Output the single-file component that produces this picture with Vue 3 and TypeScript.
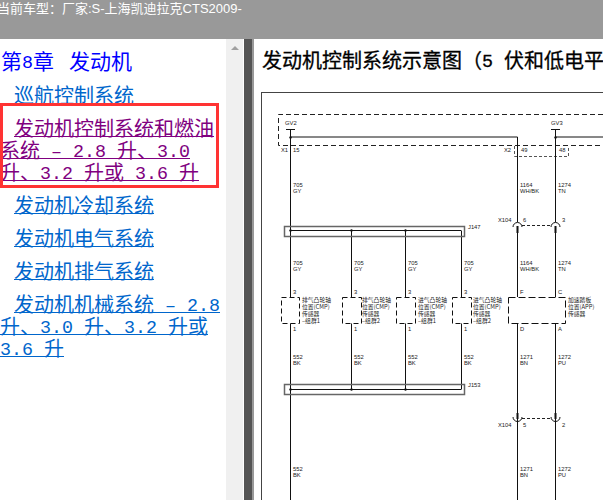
<script setup lang="ts">
interface NavLink {
  label: string
  active?: boolean
}

const links: NavLink[] = [
  { label: '巡航控制系统' },
  { label: '发动机控制系统和燃油系统 – 2.8 升、3.0 升、3.2 升或 3.6 升', active: true },
  { label: '发动机冷却系统' },
  { label: '发动机电气系统' },
  { label: '发动机排气系统' },
  { label: '发动机机械系统 – 2.8 升、3.0 升、3.2 升或 3.6 升' },
]

// latin runs are set narrower than the cjk ones, half width like the source font
function runs(text: string) {
  return text
    .split(/([ -~–]+)/)
    .filter(Boolean)
    .map((t) => ({ t, latin: /^[ -~–]/.test(t) }))
}

const title = '发动机控制系统示意图（5 伏和低电平'

const wirePaths = [
  'M290.5 129V297',
  'M290.5 137H517.5V222',
  'M555.5 129V222',
  'M555.5 137H603',
  'M286 129.5H295M551 129.5H560',
  'M351.5 231V297M405.5 231V297M461.5 231V297',
  'M517.5 232V297M555.5 232V297',
  'M290.5 323V500',
  'M351.5 323V389M405.5 323V389M461.5 323V389',
  'M517.5 323V421M555.5 323V421',
  'M517.5 421V500M555.5 421V500',
]

const buses = [
  { top: 226, mid: 230.5, label: 'J147' },
  { top: 384, mid: 389.5, label: 'J153' },
]

const wireLabels = [
  { x: 293, y: 185, a: '705', b: 'GY' },
  { x: 293, y: 263, a: '705', b: 'GY' },
  { x: 354, y: 263, a: '705', b: 'GY' },
  { x: 408, y: 263, a: '705', b: 'GY' },
  { x: 464, y: 263, a: '705', b: 'GY' },
  { x: 293, y: 357, a: '552', b: 'BK' },
  { x: 354, y: 357, a: '552', b: 'BK' },
  { x: 408, y: 357, a: '552', b: 'BK' },
  { x: 464, y: 357, a: '552', b: 'BK' },
  { x: 293, y: 469, a: '552', b: 'BK' },
  { x: 520, y: 185, a: '1164', b: 'WH/BK' },
  { x: 558, y: 185, a: '1274', b: 'TN' },
  { x: 520, y: 263, a: '1164', b: 'WH/BK' },
  { x: 558, y: 263, a: '1274', b: 'TN' },
  { x: 520, y: 357, a: '1271', b: 'BN' },
  { x: 558, y: 357, a: '1272', b: 'PU' },
  { x: 520, y: 469, a: '1271', b: 'BN' },
  { x: 558, y: 469, a: '1272', b: 'PU' },
]

const sensors = [
  { x: 281, w: 18, wire: 293, text: 302, lines: ['排气凸轮轴', '位置(CMP)', '传感器', '–组群1'] },
  { x: 342, w: 19, wire: 354, text: 362, lines: ['排气凸轮轴', '位置(CMP)', '传感器', '–组群2'] },
  { x: 396, w: 19, wire: 408, text: 418, lines: ['进气凸轮轴', '位置(CMP)', '传感器', '–组群1'] },
  { x: 452, w: 19, wire: 464, text: 473, lines: ['进气凸轮轴', '位置(CMP)', '传感器', '–组群2'] },
]

const pins = [
  { x: 293, y: 294, t: '3' },
  { x: 354, y: 294, t: '3' },
  { x: 408, y: 294, t: '3' },
  { x: 464, y: 294, t: '3' },
  { x: 293, y: 331, t: '1' },
  { x: 354, y: 331, t: '1' },
  { x: 408, y: 331, t: '1' },
  { x: 464, y: 331, t: '1' },
  { x: 520, y: 294, t: 'F' },
  { x: 558, y: 294, t: 'C' },
  { x: 520, y: 331, t: 'D' },
  { x: 558, y: 331, t: 'A' },
  { x: 285, y: 125, t: 'GV2' },
  { x: 551, y: 125, t: 'GV3' },
  { x: 281, y: 152, t: 'X1' },
  { x: 293, y: 152, t: '15' },
  { x: 504, y: 152, t: 'X2' },
  { x: 521, y: 152, t: '49' },
  { x: 559, y: 152, t: '48' },
  { x: 498, y: 222, t: 'X104' },
  { x: 523, y: 222, t: '6' },
  { x: 562, y: 222, t: '3' },
  { x: 498, y: 427, t: 'X104' },
  { x: 523, y: 427, t: '5' },
  { x: 562, y: 427, t: '2' },
]
</script>

<template>
  <div class="page">
    <header class="topbar">当前车型：厂家:S-上海凯迪拉克CTS2009-</header>
    <div class="panes">
      <nav class="toc">
        <div class="toc-body">
          <h2 class="chapter">第<span class="latin">8</span>章<span class="gap"></span>发动机</h2>
          <p v-for="link in links" :key="link.label" class="entry">
            <a class="link" :class="{ visited: link.active }" href="#">
              <span v-for="(r, i) in runs(link.label)" :key="i" :class="{ latin: r.latin }">{{ r.t }}</span>
            </a>
          </p>
          <div class="highlight"></div>
        </div>
        <div class="scroll"><span class="arrow"></span></div>
      </nav>
      <div class="divider"></div>
      <main class="doc">
        <h1 class="doc-title">
          <span v-for="(r, i) in runs(title)" :key="i" :class="{ latin: r.latin }">{{ r.t }}</span>
        </h1>
        <div class="figure">
          <svg class="diagram" width="341" height="407" viewBox="262 93 341 407">
            <!-- dashed harness outlines -->
            <g fill="none" stroke="#222">
              <path d="M603 114.5H278.5V145.5H603" stroke-dasharray="5 3" />
              <path d="M514.5 146V156.5H568.5V146" stroke="#555" stroke-dasharray="3 2" />
              <path d="M522 225.5H550M522 418.5H550" stroke-dasharray="3 2" />
            </g>

            <g fill="none" stroke="#111">
              <path v-for="d in wirePaths" :key="d" :d="d" />
              <path d="M513 227a4.5 4.5 0 0 1 9 0M551 227a4.5 4.5 0 0 1 9 0" />
              <path d="M513 417a4.5 4.5 0 0 0 9 0M551 417a4.5 4.5 0 0 0 9 0" />
              <path d="M517.5 226V233M555.5 226V233M517.5 413V419M555.5 413V419" stroke-width="2" />
            </g>
            <g fill="#111">
              <circle cx="290.5" cy="137.5" r="1.2" />
              <circle cx="555.5" cy="137.5" r="1.2" />
            </g>

            <g v-for="b in buses" :key="b.label">
              <rect x="284.5" :y="b.top + 0.5" width="180" height="10" fill="none" stroke="#666" stroke-width="1.5" />
              <path :d="`M290 ${b.mid}H461.5`" stroke="#111" fill="none" />
              <circle cx="290.5" :cy="b.mid" r="1.2" fill="#111" />
              <circle cx="351.5" :cy="b.mid" r="1.2" fill="#111" />
              <circle cx="405.5" :cy="b.mid" r="1.2" fill="#111" />
              <text x="468" :y="b.top + 3" class="tiny">{{ b.label }}</text>
            </g>

            <g v-for="s in sensors" :key="s.text">
              <rect :x="s.x + 0.5" y="297.5" :width="s.w" height="26" fill="#fff" stroke="#111" stroke-dasharray="5 3" />
              <text
                v-for="(line, i) in s.lines"
                :key="line"
                :x="s.text"
                :y="301.5 + i * 7"
                class="cjk"
              >{{ line }}</text>
            </g>
            <rect x="508.5" y="297.5" width="57" height="26" fill="#fff" stroke="#111" stroke-dasharray="7 3" />
            <text x="568" y="301.5" class="cjk">加速踏板</text>
            <text x="568" y="308.5" class="cjk">位置(APP)</text>
            <text x="568" y="316" class="cjk">传感器</text>

            <g v-for="(w, i) in wireLabels" :key="i" class="tiny">
              <text :x="w.x" :y="w.y + 2">{{ w.a }}</text>
              <text :x="w.x" :y="w.y + 8">{{ w.b }}</text>
            </g>
            <text v-for="(p, i) in pins" :key="i" :x="p.x" :y="p.y" class="tiny">{{ p.t }}</text>
          </svg>
        </div>
      </main>
    </div>
  </div>
</template>

<style scoped>
.page {
  width: 603px;
  height: 500px;
  display: flex;
  flex-direction: column;
  overflow: hidden;
  background: #fff;
  font-family: "Noto Sans CJK SC", sans-serif;
}

.topbar {
  height: 39px;
  flex: none;
  box-sizing: border-box;
  padding-top: 1px;
  background: #999;
  color: #fff;
  font: 13px/16px "Liberation Sans", "Noto Sans CJK SC", sans-serif;
  margin-left: -3px;
  white-space: nowrap;
}

.panes {
  flex: 1;
  min-height: 0;
  display: flex;
}

.toc {
  width: 244px;
  flex: none;
  display: flex;
}

.toc-body {
  position: relative;
  width: 226px;
  flex: none;
  box-sizing: border-box;
  padding: 9px 5.5px 0 0;
}

.latin {
  font-family: "Liberation Mono", monospace;
  font-size: 18.33px;
  line-height: 0;
  vertical-align: 1px;
}

.chapter {
  margin: 0 0 12px 1px;
  font-size: 21px;
  line-height: 24px;
  font-weight: 400;
  color: #00f;
}

.gap {
  display: inline-block;
  width: 15px;
}

.entry {
  margin: 0 0 11px;
  font-size: 20px;
  line-height: 22px;
  text-indent: 14px;
}

.link {
  color: #0066cc;
  text-decoration: underline;
  text-decoration-thickness: 1px;
  text-underline-offset: 0;
}

.link.visited {
  color: #800080;
}

.highlight {
  position: absolute;
  left: 0;
  top: 64px;
  width: 219px;
  height: 85px;
  border: 3px solid #f33;
  box-sizing: border-box;
}

.scroll {
  width: 17px;
  flex: none;
  background: #f0f0f0;
  display: flex;
  justify-content: center;
  padding-top: 7px;
  box-sizing: border-box;
}

.arrow {
  width: 0;
  height: 0;
  border: 4px solid transparent;
  border-top: 0;
  border-bottom: 4px solid #a0a0a0;
}

.divider {
  width: 8px;
  flex: none;
  background: #555;
  border-right: 2px solid #999;
}

.doc {
  flex: 1;
  min-width: 0;
  overflow: hidden;
  padding-left: 7px;
}

.doc-title {
  margin: 10px 0 0 1px;
  font-size: 20px;
  line-height: 22px;
  font-weight: 400;
  color: #000;
  white-space: nowrap;
  -webkit-text-stroke: 0.3px #000;
}

.figure {
  margin-top: 21px;
  width: 400px;
  height: 420px;
  box-sizing: border-box;
  border: 1px solid #444;
  border-right: 0;
}

.diagram {
  display: block;
}

.tiny {
  font: 5.8px "Liberation Sans", sans-serif;
  fill: #222;
}

.cjk {
  font: 5.8px "Noto Sans CJK SC", sans-serif;
  fill: #222;
}
</style>
